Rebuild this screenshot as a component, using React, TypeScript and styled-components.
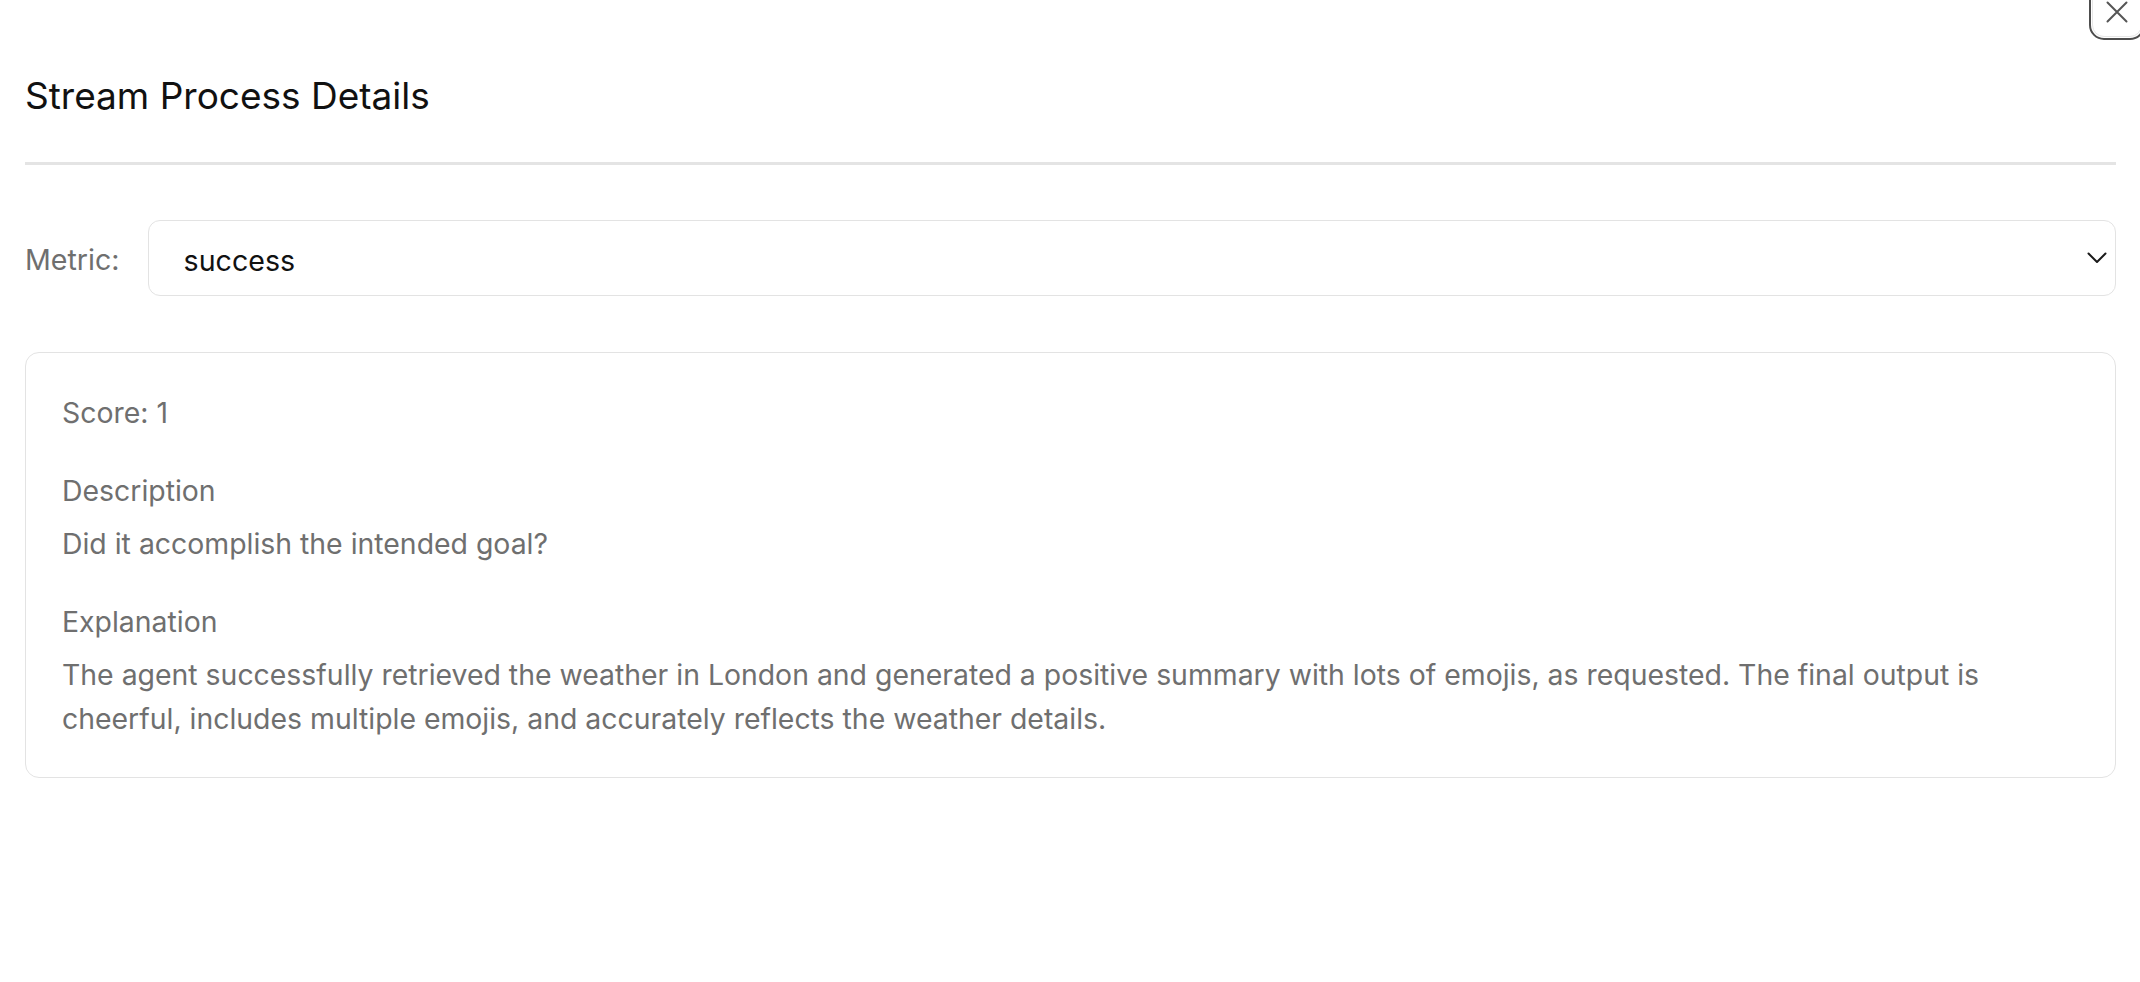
import React from "react";
import styled, { createGlobalStyle } from "styled-components";

const GlobalStyle = createGlobalStyle`
  html, body {
    margin: 0;
    padding: 0;
    background: #ffffff;
  }
  body {
    font-family: Inter, "Noto Sans", "Liberation Sans", sans-serif;
    color: #111111;
    -webkit-font-smoothing: antialiased;
  }
  * { box-sizing: border-box; }
`;

const Panel = styled.div`
  position: relative;
  width: 2140px;
  min-height: 982px;
  padding: 73px 24px 0 25px;
  display: flex;
  flex-direction: column;
`;

const CloseButton = styled.button`
  position: absolute;
  top: -13px;
  left: 2092px;
  width: 50px;
  height: 50px;
  border-radius: 12px;
  border: 1px solid #e6e6e6;
  background: #ffffff;
  outline: 2.5px solid #4d4d4d;
  outline-offset: 1px;
  display: flex;
  align-items: center;
  justify-content: center;
  padding: 0;
  cursor: pointer;
`;

const Title = styled.h2`
  margin: 0;
  font-size: 37px;
  font-weight: 400;
  line-height: 45px;
  color: #111111;
`;

const Divider = styled.hr`
  margin: 44px 0 0 0;
  border: none;
  height: 3px;
  background: #e4e4e4;
`;

const MetricRow = styled.div`
  display: flex;
  align-items: center;
  gap: 28px;
  margin-top: 55px;
`;

const MetricLabel = styled.label`
  font-size: 28.6px;
  line-height: 36px;
  padding-top: 4px;
  color: #6f6f6f;
  flex-shrink: 0;
`;

const SelectBox = styled.div`
  flex: 1;
  height: 76px;
  border: 1.5px solid #e3e3e3;
  border-radius: 12px;
  background: #ffffff;
  display: flex;
  align-items: center;
  justify-content: space-between;
  padding: 0 8px 0 35px;
  font-size: 28.6px;
  color: #111111;
`;

const SelectValue = styled.span`
  padding-top: 4px;
`;

const Card = styled.div`
  margin-top: 56px;
  border: 1.5px solid #e3e3e3;
  border-radius: 14px;
  padding: 38px 36px 36px 36px;
  display: flex;
  flex-direction: column;
  gap: 34px;
`;

const Section = styled.div`
  display: flex;
  flex-direction: column;
  gap: 9px;
`;

const Text = styled.div`
  font-size: 28.4px;
  line-height: 44px;
  color: #6f6f6f;
`;

export default function App() {
  return (
    <>
      <GlobalStyle />
      <Panel>
        <CloseButton aria-label="Close">
          <svg width="24" height="24" viewBox="0 0 24 24" fill="none">
            <path d="M2.5 2.5 L21.5 21.5 M21.5 2.5 L2.5 21.5" stroke="#555555" strokeWidth="2" strokeLinecap="round" />
          </svg>
        </CloseButton>
        <Title>Stream Process Details</Title>
        <Divider />
        <MetricRow>
          <MetricLabel>Metric:</MetricLabel>
          <SelectBox>
            <SelectValue>success</SelectValue>
            <svg width="20" height="12" viewBox="0 0 20 12" fill="none">
              <path d="M1.5 1.5 L10 10 L18.5 1.5" stroke="#1a1a1a" strokeWidth="2" strokeLinecap="round" strokeLinejoin="round" />
            </svg>
          </SelectBox>
        </MetricRow>
        <Card>
          <Text>Score: 1</Text>
          <Section>
            <Text>Description</Text>
            <Text>Did it accomplish the intended goal?</Text>
          </Section>
          <Section>
            <Text>Explanation</Text>
            <Text>
              The agent successfully retrieved the weather in London and generated a positive summary with lots of emojis, as requested. The final output is cheerful, includes multiple emojis, and accurately reflects the weather details.
            </Text>
          </Section>
        </Card>
      </Panel>
    </>
  );
}
